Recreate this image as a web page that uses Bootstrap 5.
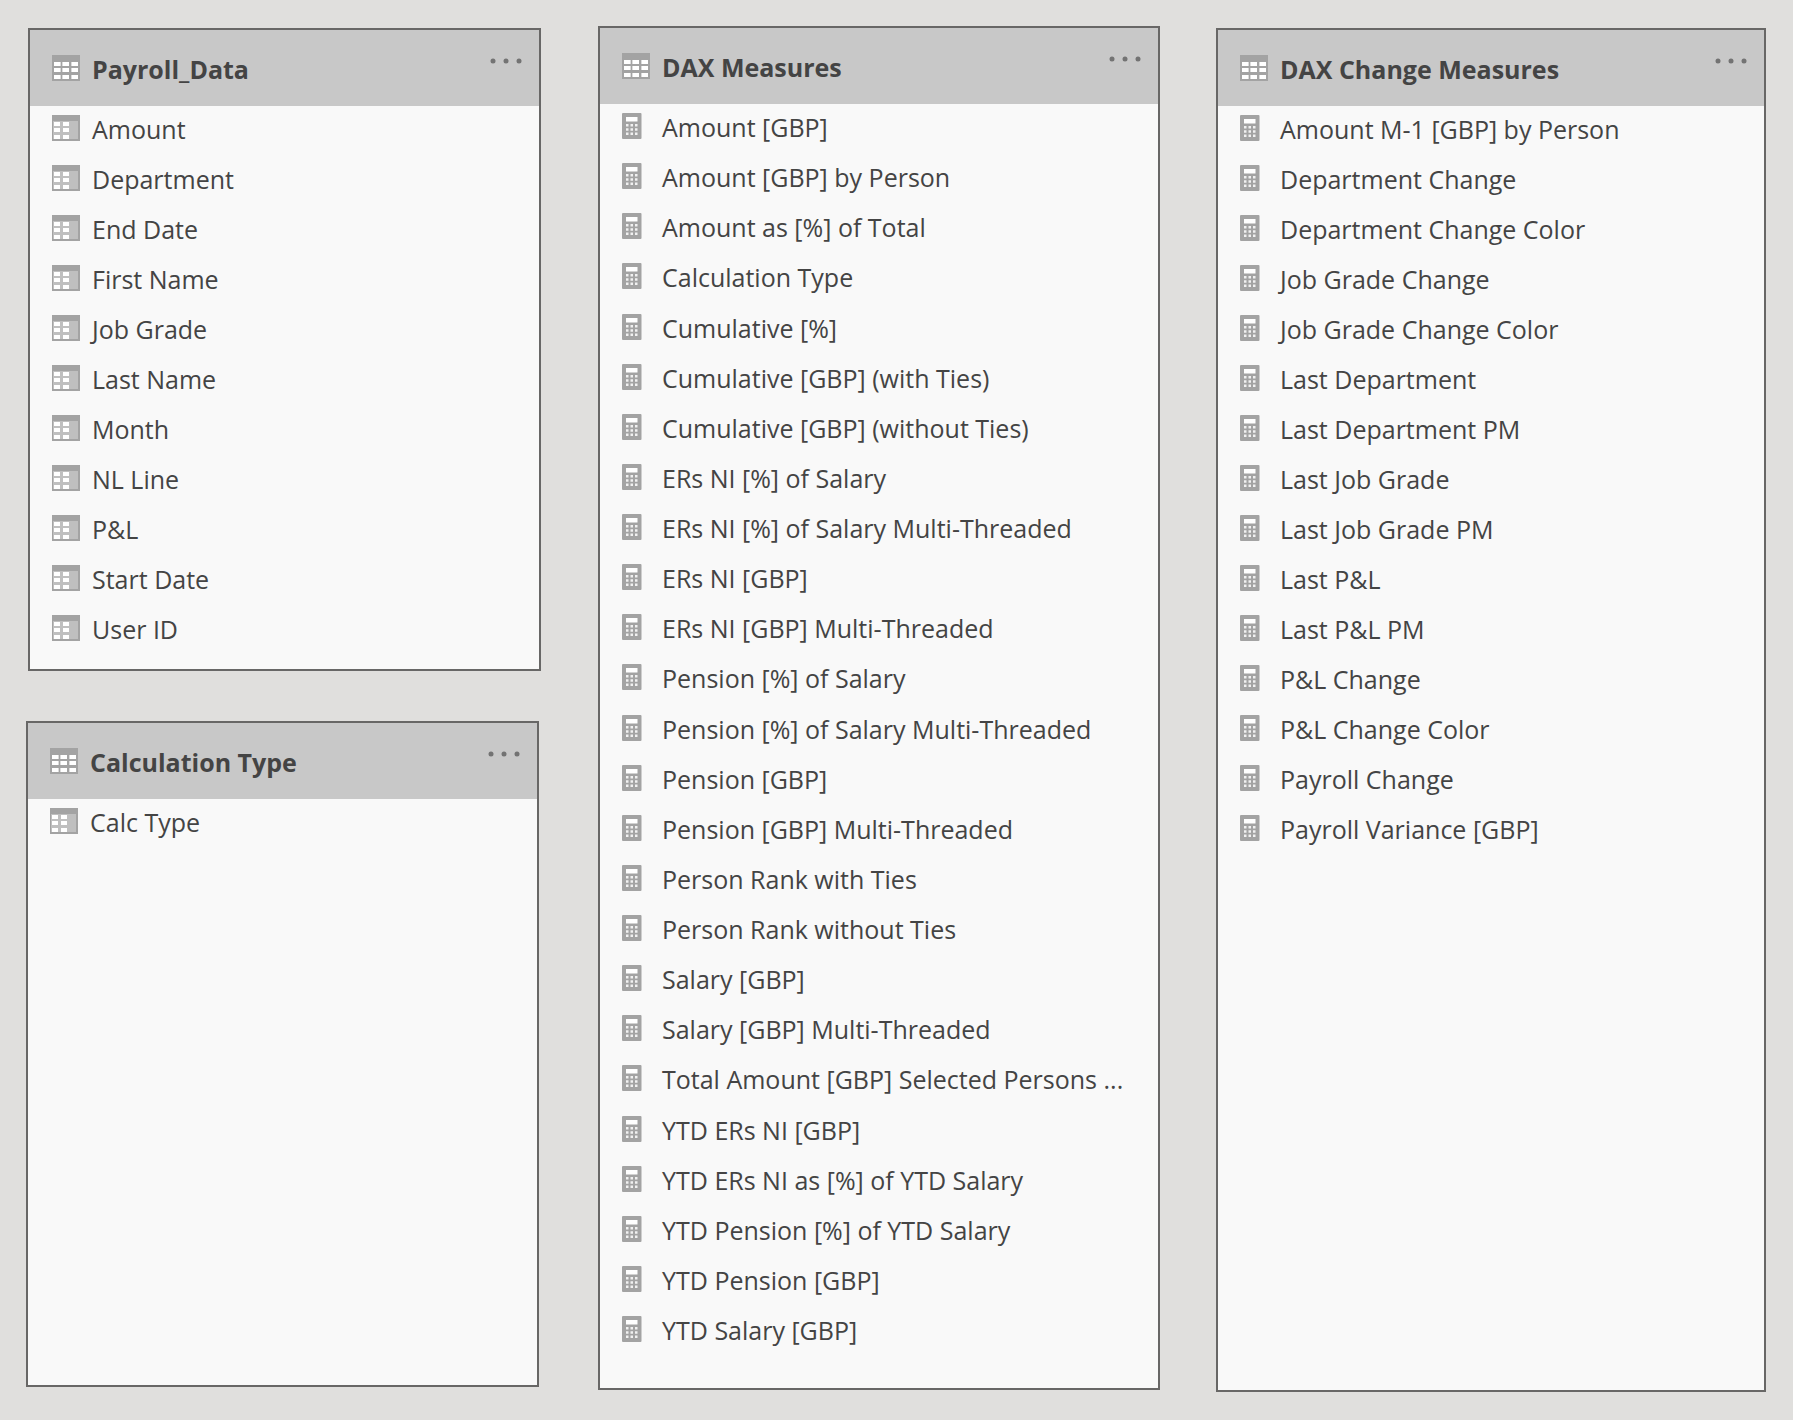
<!DOCTYPE html>
<html lang="en">
<head>
<meta charset="utf-8">
<meta name="viewport" content="width=device-width, initial-scale=1">
<title>Model view</title>
<link href="https://cdn.jsdelivr.net/npm/bootstrap@5.3.0/dist/css/bootstrap.min.css" rel="stylesheet">
<style>
  body { background: #e0dfdd; color: #444; font-family: "Open Sans", "Noto Sans", sans-serif; font-size: 25px; }
  .model { display: grid; grid-template-columns: 516fr 562fr 550fr; column-gap: 56px; padding: 26px 27px 30px 26px; }
  .stack { padding: 2px 0 3px; gap: 50px; }
  .stack .entity:first-child { margin: 0 1px 0 2px; }
  .stack .entity:last-child { margin-right: 3px; }
  .lowered { margin: 2px 0 -2px; }
  .entity { background: #f9f9f9; border: 2px solid #686766; border-radius: 0; color: inherit; min-width: 0; }
  .entity-head { background: #c8c8c8; height: 76px; padding: 0 13px 0 22px; gap: 12px; }
  .entity-head h2 { font-size: 25px; font-weight: 700; line-height: 78px; margin: 0; }
  .fields { padding: 0 22px; }
  .fields li { min-height: 50px; gap: 12px; line-height: 46px; min-width: 0; }
  .glyph { width: 28px; height: 26px; flex: none; }
  .entity-head .glyph { margin-top: 25px; }
  .fields .glyph { margin-top: 9px; }
  .more { border: 0; background: none; padding: 0; width: 40px; height: 62px; line-height: 0; }
  .more svg { width: 40px; height: 6px; }
  .pad-s { padding-bottom: 13px; }
  .pad-l { padding-bottom: 31px; }
</style>
<script src="https://cdn.jsdelivr.net/npm/bootstrap@5.3.0/dist/js/bootstrap.bundle.min.js"></script>
</head>
<body>
<svg class="d-none" aria-hidden="true">
  <symbol id="table" viewBox="0 0 28 26">
    <path fill="#a3a3a3" d="M0 0h28v26H0z"/>
    <path fill="#fff" d="M2 7h6v4H2zM11 7h6v4h-6zM20 7h6v4h-6zM2 13h6v4H2zM11 13h6v4h-6zM20 13h6v4h-6zM2 20h6v4H2zM11 20h6v4h-6zM20 20h6v4h-6z"/>
    <path fill="#dcdcdc" d="M8 7h1v4H8zM10 7h1v4h-1zM19 7h1v4h-1zM8 13h1v4H8zM10 13h1v4h-1zM19 13h1v4h-1zM8 20h1v4H8zM10 20h1v4h-1zM19 20h1v4h-1z"/>
  </symbol>
  <symbol id="column" viewBox="0 0 28 26">
    <path fill="#a3a3a3" d="M0 0h28v26H0z"/>
    <path fill="#bfbfbf" d="M1 6h25v18H1z"/>
    <path fill="#fff" d="M2 7h6v4H2zM11 7h6v4h-6zM2 13h6v4H2zM11 13h6v4h-6zM2 20h6v4H2zM11 20h6v4h-6z"/>
  </symbol>
  <symbol id="calc" viewBox="0 0 28 26">
    <rect width="19.5" height="26" rx="1" fill="#a3a3a3"/>
    <path fill="#fff" d="M4 4h11.500v4.500H4z"/>
    <path fill="#f1f1f1" d="M4 11h2.500v2.500H4zM8.500 11H11v2.500H8.500zM13 11h2.500v2.500H13zM4 15.200h2.500v2.500H4zM8.500 15.200H11v2.500H8.500zM13 15.200h2.500v2.500H13zM4 19.500h2.500V22H4zM8.500 19.500H11V22H8.500zM13 19.500h2.500V22H13z"/>
  </symbol>
  <symbol id="dots" viewBox="0 0 40 6">
    <g fill="#737373"><circle cx="7" cy="3" r="2.500"/><circle cx="20" cy="3" r="2.500"/><circle cx="33" cy="3" r="2.500"/></g>
  </symbol>
</svg>

<main class="model min-vh-100">
  <div class="stack d-flex flex-column">
    <section class="entity card">
      <header class="entity-head d-flex"><svg class="glyph"><use href="#table"/></svg><h2 class="flex-grow-1 text-truncate">Payroll_Data</h2><button type="button" class="more" aria-label="More options"><svg><use href="#dots"/></svg></button></header>
      <ul class="fields pad-s list-unstyled mb-0">
        <li class="d-flex"><svg class="glyph"><use href="#column"/></svg><span>Amount</span></li>
        <li class="d-flex"><svg class="glyph"><use href="#column"/></svg><span>Department</span></li>
        <li class="d-flex"><svg class="glyph"><use href="#column"/></svg><span>End Date</span></li>
        <li class="d-flex"><svg class="glyph"><use href="#column"/></svg><span>First Name</span></li>
        <li class="d-flex"><svg class="glyph"><use href="#column"/></svg><span>Job Grade</span></li>
        <li class="d-flex"><svg class="glyph"><use href="#column"/></svg><span>Last Name</span></li>
        <li class="d-flex"><svg class="glyph"><use href="#column"/></svg><span>Month</span></li>
        <li class="d-flex"><svg class="glyph"><use href="#column"/></svg><span>NL Line</span></li>
        <li class="d-flex"><svg class="glyph"><use href="#column"/></svg><span>P&amp;L</span></li>
        <li class="d-flex"><svg class="glyph"><use href="#column"/></svg><span>Start Date</span></li>
        <li class="d-flex"><svg class="glyph"><use href="#column"/></svg><span>User ID</span></li>
      </ul>
    </section>
    <section class="entity card flex-grow-1">
      <header class="entity-head d-flex"><svg class="glyph"><use href="#table"/></svg><h2 class="flex-grow-1 text-truncate">Calculation Type</h2><button type="button" class="more" aria-label="More options"><svg><use href="#dots"/></svg></button></header>
      <ul class="fields list-unstyled mb-0">
        <li class="d-flex"><svg class="glyph"><use href="#column"/></svg><span>Calc Type</span></li>
      </ul>
    </section>
  </div>

  <section class="entity card">
    <header class="entity-head d-flex"><svg class="glyph"><use href="#table"/></svg><h2 class="flex-grow-1 text-truncate">DAX Measures</h2><button type="button" class="more" aria-label="More options"><svg><use href="#dots"/></svg></button></header>
    <ul class="fields pad-l list-unstyled mb-0 d-flex flex-column flex-grow-1">
      <li class="d-flex flex-fill"><svg class="glyph"><use href="#calc"/></svg><span>Amount [GBP]</span></li>
      <li class="d-flex flex-fill"><svg class="glyph"><use href="#calc"/></svg><span>Amount [GBP] by Person</span></li>
      <li class="d-flex flex-fill"><svg class="glyph"><use href="#calc"/></svg><span>Amount as [%] of Total</span></li>
      <li class="d-flex flex-fill"><svg class="glyph"><use href="#calc"/></svg><span>Calculation Type</span></li>
      <li class="d-flex flex-fill"><svg class="glyph"><use href="#calc"/></svg><span>Cumulative [%]</span></li>
      <li class="d-flex flex-fill"><svg class="glyph"><use href="#calc"/></svg><span>Cumulative [GBP] (with Ties)</span></li>
      <li class="d-flex flex-fill"><svg class="glyph"><use href="#calc"/></svg><span>Cumulative [GBP] (without Ties)</span></li>
      <li class="d-flex flex-fill"><svg class="glyph"><use href="#calc"/></svg><span>ERs NI [%] of Salary</span></li>
      <li class="d-flex flex-fill"><svg class="glyph"><use href="#calc"/></svg><span>ERs NI [%] of Salary Multi-Threaded</span></li>
      <li class="d-flex flex-fill"><svg class="glyph"><use href="#calc"/></svg><span>ERs NI [GBP]</span></li>
      <li class="d-flex flex-fill"><svg class="glyph"><use href="#calc"/></svg><span>ERs NI [GBP] Multi-Threaded</span></li>
      <li class="d-flex flex-fill"><svg class="glyph"><use href="#calc"/></svg><span>Pension [%] of Salary</span></li>
      <li class="d-flex flex-fill"><svg class="glyph"><use href="#calc"/></svg><span>Pension [%] of Salary Multi-Threaded</span></li>
      <li class="d-flex flex-fill"><svg class="glyph"><use href="#calc"/></svg><span>Pension [GBP]</span></li>
      <li class="d-flex flex-fill"><svg class="glyph"><use href="#calc"/></svg><span>Pension [GBP] Multi-Threaded</span></li>
      <li class="d-flex flex-fill"><svg class="glyph"><use href="#calc"/></svg><span>Person Rank with Ties</span></li>
      <li class="d-flex flex-fill"><svg class="glyph"><use href="#calc"/></svg><span>Person Rank without Ties</span></li>
      <li class="d-flex flex-fill"><svg class="glyph"><use href="#calc"/></svg><span>Salary [GBP]</span></li>
      <li class="d-flex flex-fill"><svg class="glyph"><use href="#calc"/></svg><span>Salary [GBP] Multi-Threaded</span></li>
      <li class="d-flex flex-fill"><svg class="glyph"><use href="#calc"/></svg><span>Total Amount [GBP] Selected Persons ...</span></li>
      <li class="d-flex flex-fill"><svg class="glyph"><use href="#calc"/></svg><span>YTD ERs NI [GBP]</span></li>
      <li class="d-flex flex-fill"><svg class="glyph"><use href="#calc"/></svg><span>YTD ERs NI as [%] of YTD Salary</span></li>
      <li class="d-flex flex-fill"><svg class="glyph"><use href="#calc"/></svg><span>YTD Pension [%] of YTD Salary</span></li>
      <li class="d-flex flex-fill"><svg class="glyph"><use href="#calc"/></svg><span>YTD Pension [GBP]</span></li>
      <li class="d-flex flex-fill"><svg class="glyph"><use href="#calc"/></svg><span>YTD Salary [GBP]</span></li>
    </ul>
  </section>

  <section class="entity card lowered">
    <header class="entity-head d-flex"><svg class="glyph"><use href="#table"/></svg><h2 class="flex-grow-1 text-truncate">DAX Change Measures</h2><button type="button" class="more" aria-label="More options"><svg><use href="#dots"/></svg></button></header>
    <ul class="fields list-unstyled mb-0">
      <li class="d-flex"><svg class="glyph"><use href="#calc"/></svg><span>Amount M-1 [GBP] by Person</span></li>
      <li class="d-flex"><svg class="glyph"><use href="#calc"/></svg><span>Department Change</span></li>
      <li class="d-flex"><svg class="glyph"><use href="#calc"/></svg><span>Department Change Color</span></li>
      <li class="d-flex"><svg class="glyph"><use href="#calc"/></svg><span>Job Grade Change</span></li>
      <li class="d-flex"><svg class="glyph"><use href="#calc"/></svg><span>Job Grade Change Color</span></li>
      <li class="d-flex"><svg class="glyph"><use href="#calc"/></svg><span>Last Department</span></li>
      <li class="d-flex"><svg class="glyph"><use href="#calc"/></svg><span>Last Department PM</span></li>
      <li class="d-flex"><svg class="glyph"><use href="#calc"/></svg><span>Last Job Grade</span></li>
      <li class="d-flex"><svg class="glyph"><use href="#calc"/></svg><span>Last Job Grade PM</span></li>
      <li class="d-flex"><svg class="glyph"><use href="#calc"/></svg><span>Last P&amp;L</span></li>
      <li class="d-flex"><svg class="glyph"><use href="#calc"/></svg><span>Last P&amp;L PM</span></li>
      <li class="d-flex"><svg class="glyph"><use href="#calc"/></svg><span>P&amp;L Change</span></li>
      <li class="d-flex"><svg class="glyph"><use href="#calc"/></svg><span>P&amp;L Change Color</span></li>
      <li class="d-flex"><svg class="glyph"><use href="#calc"/></svg><span>Payroll Change</span></li>
      <li class="d-flex"><svg class="glyph"><use href="#calc"/></svg><span>Payroll Variance [GBP]</span></li>
    </ul>
  </section>
</main>
</body>
</html>
